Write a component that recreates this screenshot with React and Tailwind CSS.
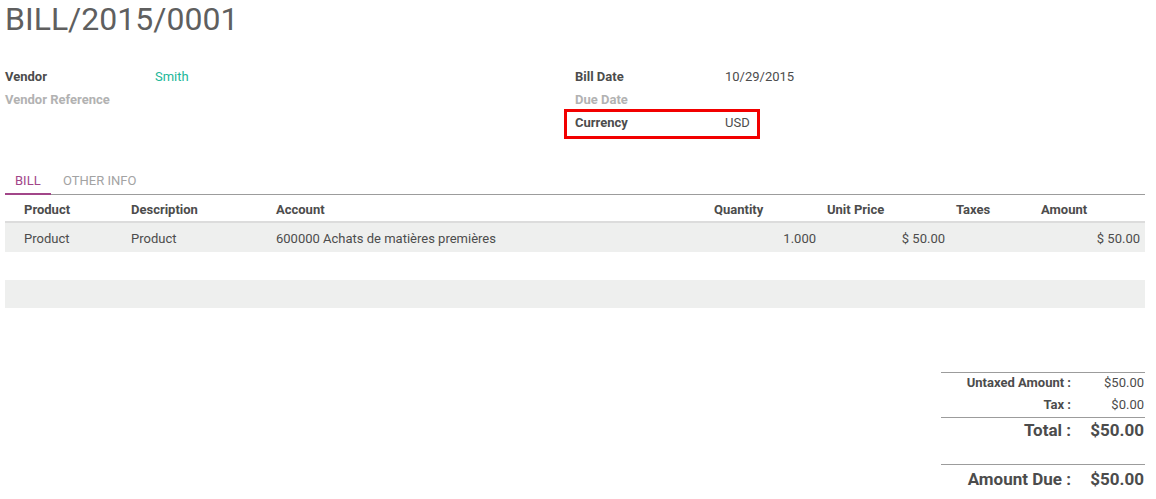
const COLS = [
  { w: 'w-[120px]', head: 'Product', headCls: 'pl-[19px]', cell: 'Product', cellCls: 'pl-[19px]' },
  { w: 'w-[145px]', head: 'Description', headCls: 'pl-[6px]', cell: 'Product', cellCls: 'pl-[6px]' },
  { w: 'w-[438px]', head: 'Account', headCls: 'pl-[6px]', cell: '600000 Achats de matières premières', cellCls: 'pl-[6px]' },
  { w: 'w-[113px]', head: 'Quantity', headCls: 'pl-[6px]', cell: '1.000', cellCls: 'pr-[5px] text-right' },
  { w: 'w-[129px]', head: 'Unit Price', headCls: 'pl-[6px]', cell: '$ 50.00', cellCls: 'pr-[5px] text-right' },
  { w: 'w-[85px]', head: 'Taxes', headCls: 'pl-[6px]', cell: '', cellCls: '' },
  { w: 'w-[110px]', head: 'Amount', headCls: 'pl-[6px]', cell: '$ 50.00', cellCls: 'pr-[5px] text-right' },
];

function Field({ label, value, muted, valueCls = '' }) {
  return (
    <div className="flex h-[23px] items-center">
      <span className={`w-[150px] font-bold ${muted ? 'text-[#b2b2b2]' : 'text-[#4c4c4c]'}`}>{label}</span>
      <span className={valueCls || 'text-[#4c4c4c]'}>{value}</span>
    </div>
  );
}

function TotalRow({ label, value, big, h }) {
  const size = big ? 'text-[17px] font-bold' : 'text-[13px]';
  return (
    <div className={`flex items-center ${h}`}>
      <span className={`w-[130px] text-right font-bold ${size}`}>{label}</span>
      <span className={`flex-1 pr-[1px] text-right ${size}`}>{value}</span>
    </div>
  );
}

export default function App() {
  return (
    <div className="min-h-[499px] w-[1156px] bg-white text-[13px] text-[#4c4c4c] font-['Roboto','Liberation_Sans',sans-serif]">
      <h1 className="h-[36px] pl-[5px] pt-[1px] text-[32px] leading-[36px] text-[#5f5f5f]">BILL/2015/0001</h1>

      <div className="mt-[29px] flex pl-[5px]">
        <div className="w-[570px]">
          <Field label="Vendor" value="Smith" valueCls="text-[#21b799]" />
          <Field label="Vendor Reference" value="" muted />
        </div>
        <div className="relative">
          <Field label="Bill Date" value="10/29/2015" />
          <Field label="Due Date" value="" muted />
          <Field label="Currency" value="USD" />
          <div className="absolute left-[-11px] top-[44px] h-[30px] w-[196px] border-[3px] border-[#f20000]" />
        </div>
      </div>

      <div className="mt-[31px] w-[1150px] px-[5px]">
        <div className="flex h-[30px] items-center border-b border-[#9c9c9c] pt-[2px] text-[13px] uppercase">
          <div className="relative flex h-full w-[46px] items-center pl-[10px] text-[#a24689]">
            Bill
            <div className="absolute bottom-[-1px] left-0 right-0 h-[2px] bg-[#a24689]" />
          </div>
          <div className="pl-[12px] text-[#a3a3a3]">Other Info</div>
        </div>

        <div className="flex h-[28px] items-center border-b-2 border-[#dcdcdc] pt-[3px] font-bold">
          {COLS.map((c) => (
            <div key={c.head} className={`${c.w} shrink-0 ${c.headCls}`}>{c.head}</div>
          ))}
        </div>
        <div className="flex h-[29px] items-center bg-[#eeefee] pt-[2px]">
          {COLS.map((c) => (
            <div key={c.head} className={`${c.w} shrink-0 ${c.cellCls}`}>{c.cell}</div>
          ))}
        </div>
        <div className="h-[28px]" />
        <div className="h-[28px] bg-[#eeefee]" />
      </div>

      <div className="ml-[941px] mt-[64px] w-[204px]">
        <div className="border-t border-[#9c9c9c]">
          <TotalRow label="Untaxed Amount :" value="$50.00" h="h-[19px]" />
          <TotalRow label="Tax :" value="$0.00" h="h-[25px]" />
        </div>
        <div className="border-t border-[#9c9c9c]">
          <TotalRow label="Total :" value="$50.00" big h="h-[25px]" />
        </div>
        <div className="mt-[21px] border-t border-[#9c9c9c]">
          <TotalRow label="Amount Due :" value="$50.00" big h="h-[30px]" />
        </div>
      </div>
    </div>
  );
}
